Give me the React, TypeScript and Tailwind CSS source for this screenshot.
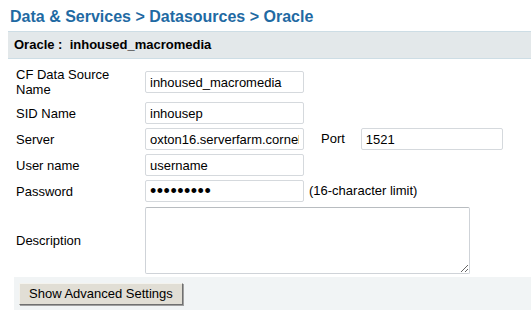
import { ReactNode } from "react";

function Row({
  label,
  children,
  className = "",
}: {
  label: ReactNode;
  children: ReactNode;
  className?: string;
}) {
  return (
    <div className={`flex items-center ${className}`}>
      <div className="w-[129px] shrink-0 pr-3 leading-[15px]">{label}</div>
      <div className="flex items-center">{children}</div>
    </div>
  );
}

const inputCls =
  "h-[22px] rounded-[2px] border border-[#d5d9dd] bg-white px-[4px] text-[13px] text-black outline-none";

export default function App() {
  return (
    <div className="h-[322px] w-[531px] bg-white font-['Liberation_Sans',Arial,sans-serif] text-[13px] text-black">
      <h1 className="pl-[10px] pt-[7px] text-[16px] font-bold leading-[19px] text-[#1f6aa3]">
        Data &amp; Services &gt; Datasources &gt; Oracle
      </h1>
      <div className="ml-[8px] mt-[5px] flex h-[28px] items-center border-y border-[#cddde5] bg-[#e3e8ea] pl-[6px] text-[13px] font-bold">
        Oracle :&nbsp; inhoused_macromedia
      </div>

      <div className="flex flex-col gap-[4px] pl-[16px] pt-[8px]">
        <Row label={<>CF Data Source<br />Name</>} className="mb-[1px]">
          <input className={`${inputCls} w-[159px]`} defaultValue="inhoused_macromedia" />
        </Row>
        <Row label="SID Name">
          <input className={`${inputCls} w-[159px]`} defaultValue="inhousep" />
        </Row>
        <Row label="Server">
          <input
            className={`${inputCls} w-[159px]`}
            defaultValue="oxton16.serverfarm.cornell.edu"
          />
          <span className="ml-[17px] mr-[16px]">Port</span>
          <input className={`${inputCls} w-[142px]`} defaultValue="1521" />
        </Row>
        <Row label="User name">
          <input className={`${inputCls} w-[159px]`} defaultValue="username" />
        </Row>
        <Row label="Password">
          <input
            type="password"
            className={`${inputCls} w-[159px] text-[18px] tracking-[0.5px]`}
            defaultValue="password1"
          />
          <span className="ml-[5px]">(16-character limit)</span>
        </Row>
        <Row label="Description" className="mt-[1px]">
          <textarea className="h-[67px] w-[325px] resize rounded-[2px] border border-[#cfd3d8] border-t-[#b8bcc0] bg-white text-[13px] outline-none" />
        </Row>
      </div>

      <div className="ml-[14px] mt-[3px] flex h-[33px] items-center bg-[#f1f4f5] pl-[5px]">
        <button className="h-[22px] border border-t-[#f4f3ee] border-l-[#f4f3ee] border-b-[#707070] border-r-[#707070] bg-[#e1ded5] px-[9px] text-[13px] leading-none text-black shadow-[1px_1px_0_#a0a0a0]">
          Show Advanced Settings
        </button>
      </div>
    </div>
  );
}
